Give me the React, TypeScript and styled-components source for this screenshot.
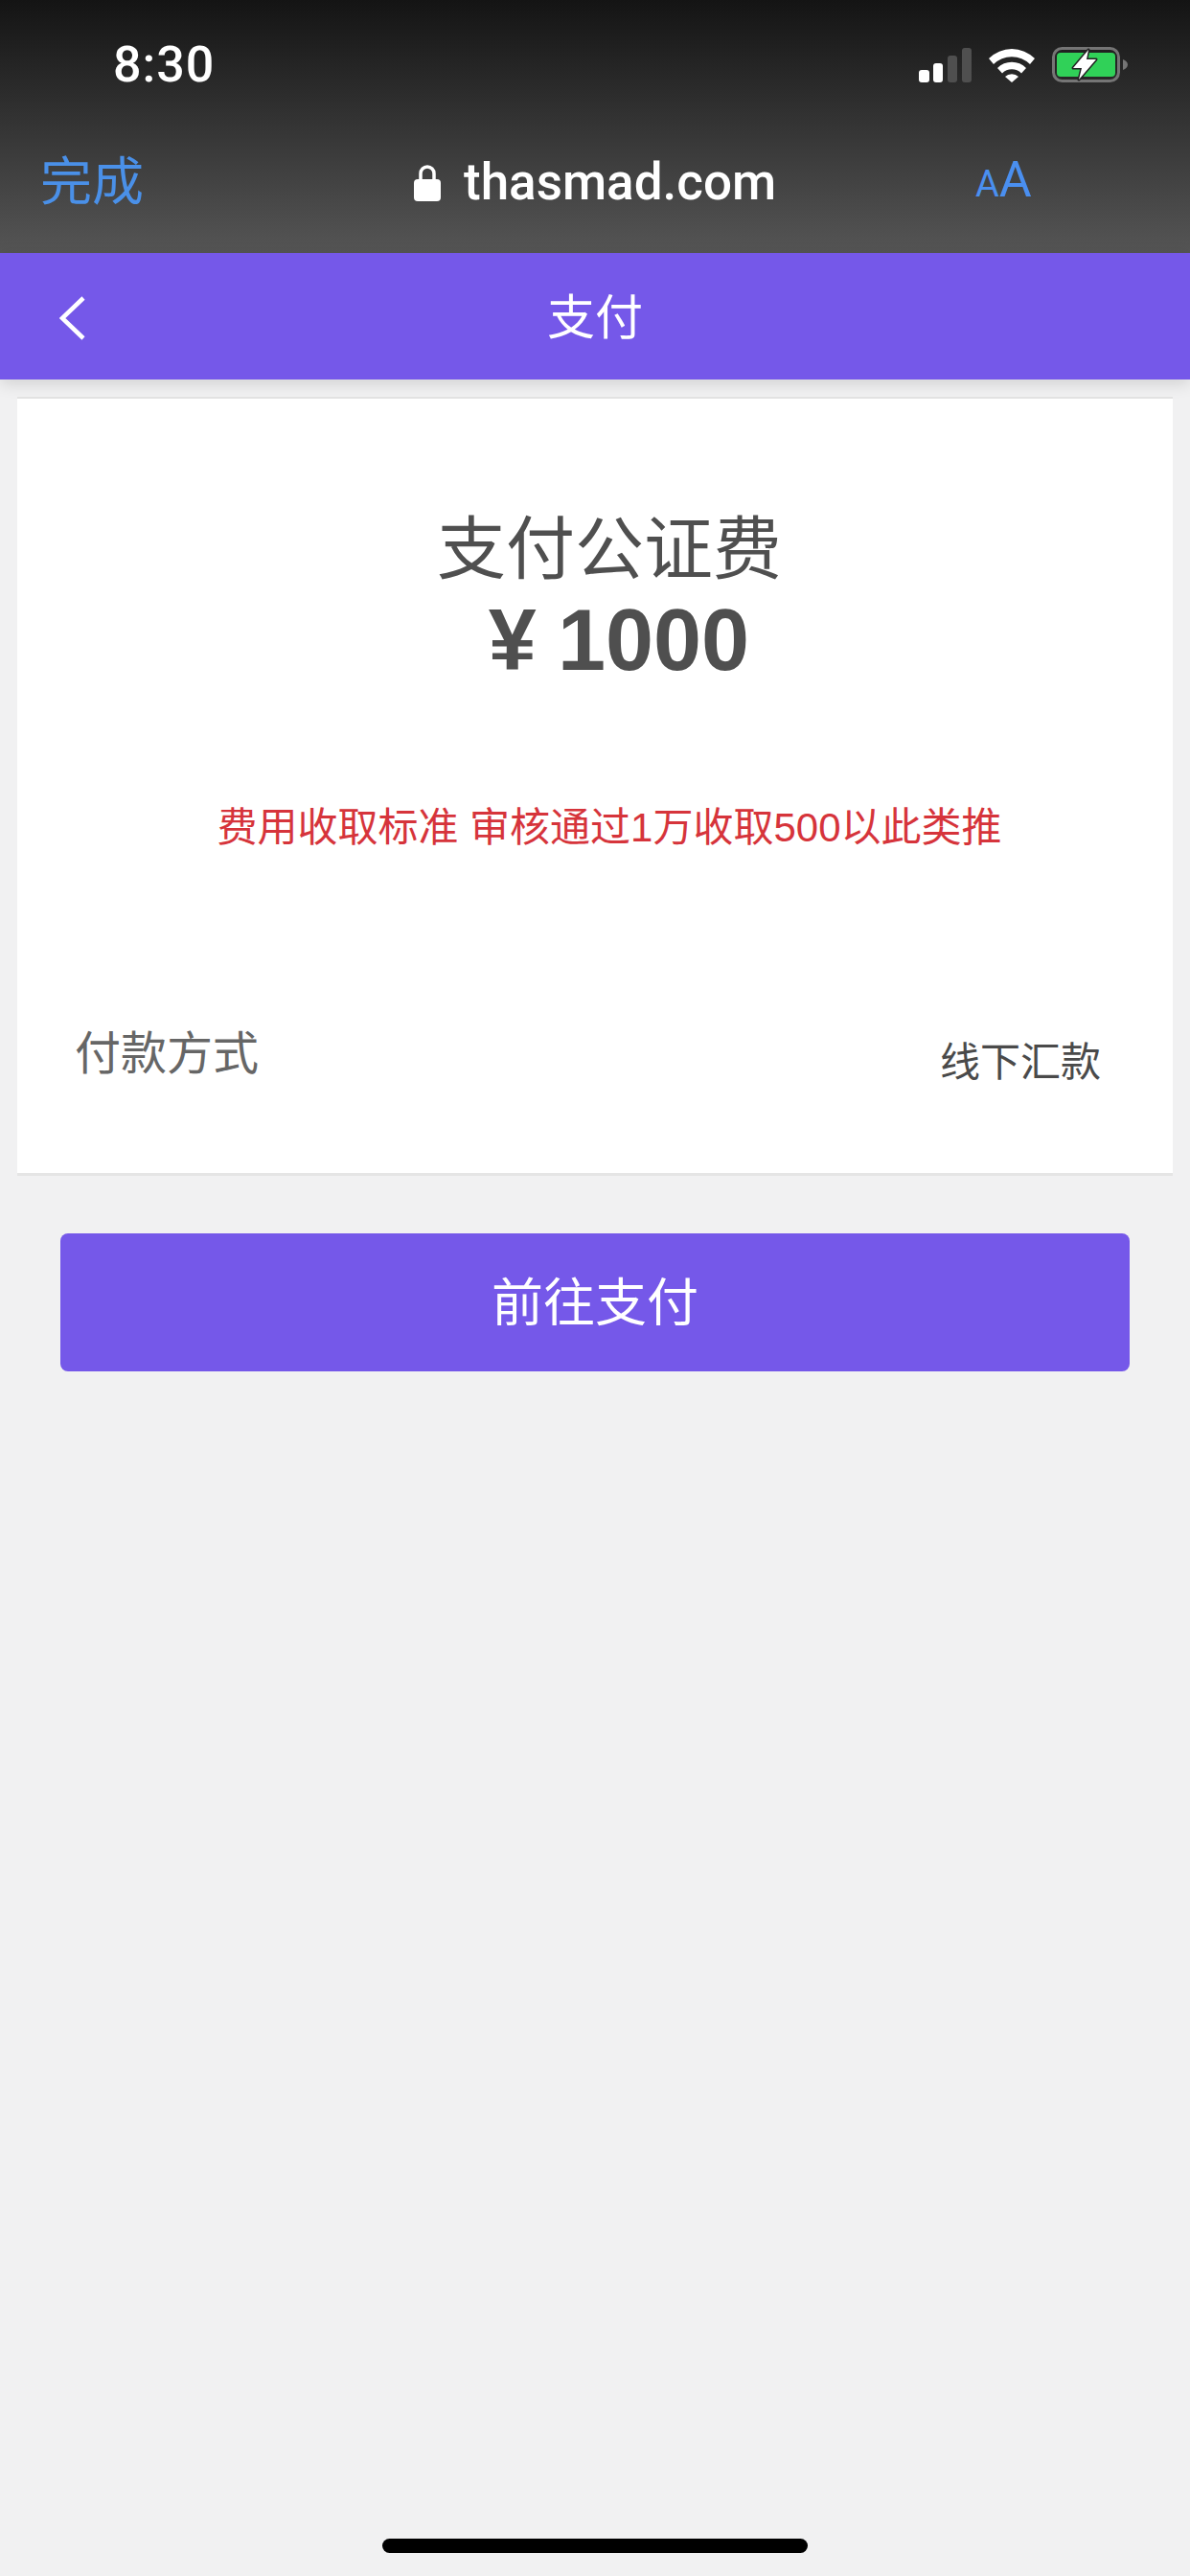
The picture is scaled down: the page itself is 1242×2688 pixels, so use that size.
import styled, { createGlobalStyle } from 'styled-components';

const purple = '#7558e9';

const GlobalStyle = createGlobalStyle`
  html, body {
    margin: 0;
    padding: 0;
    background: #f1f1f2;
  }
  * {
    box-sizing: border-box;
  }
`;

const Page = styled.div`
  width: 1242px;
  height: 2688px;
  display: flex;
  flex-direction: column;
  background: #f1f1f2;
  font-family: 'Liberation Sans', 'Noto Sans CJK SC', sans-serif;
  overflow: hidden;
`;

const BrowserChrome = styled.div`
  height: 264px;
  flex: none;
  display: flex;
  flex-direction: column;
  background: linear-gradient(180deg, #141414 0%, #555555 100%);
`;

const StatusBar = styled.div`
  height: 155px;
  padding: 42px 65px 0 118px;
  display: flex;
  justify-content: space-between;
  align-items: flex-start;
`;

const Time = styled.span`
  font-family: Roboto, sans-serif;
  font-size: 52px;
  font-weight: 500;
  line-height: 52px;
  letter-spacing: 1px;
  color: #fff;
`;

const StatusIcons = styled.div`
  display: flex;
  align-items: center;
  gap: 18px;
  padding-top: 7px;
`;

const AddressRow = styled.div`
  display: flex;
  align-items: center;
  height: 70px;
  padding: 0 42px;
`;

const DoneButton = styled.span`
  font-size: 54px;
  line-height: 70px;
  color: #4a90e8;
  width: 390px;
`;

const Domain = styled.div`
  display: flex;
  align-items: center;
  gap: 24px;
  width: 586px;
  font-family: Roboto, sans-serif;
  font-size: 53px;
  font-weight: 500;
  color: #fff;
`;

const ReaderButton = styled.div`
  display: flex;
  align-items: baseline;
  font-family: Roboto, sans-serif;
  color: #4a8ff0;
  line-height: 70px;
`;

const ReaderLetter = styled.span<{ $large?: boolean }>`
  font-size: ${(props) => (props.$large ? '52px' : '38px')};
`;

const NavBar = styled.div`
  height: 132px;
  flex: none;
  position: relative;
  z-index: 1;
  display: flex;
  align-items: center;
  padding-left: 62px;
  background: ${purple};
  box-shadow: 0 4px 16px rgba(0, 0, 0, 0.14);
`;

const BackWrap = styled.div`
  display: flex;
  margin-top: 4px;
`;

const NavTitle = styled.div`
  flex: 1;
  padding: 0 89px 6px 0;
  text-align: center;
  font-size: 50px;
  color: #fff;
`;

const Card = styled.div`
  margin: 18px 18px 0;
  height: 813px;
  flex: none;
  display: flex;
  flex-direction: column;
  background: #fff;
  border-top: 2px solid #e3e3e3;
  border-bottom: 3px solid #e5e5e5;
`;

const Summary = styled.div`
  padding: 115px 0 0 30px;
  display: flex;
  flex-direction: column;
  align-items: center;
`;

const SummaryTitle = styled.div`
  font-size: 72px;
  line-height: 84px;
  color: #4f4f4f;
`;

const Amount = styled.div`
  margin: 5px 0 0 20px;
  font-size: 90px;
  line-height: 96px;
  font-weight: 700;
  word-spacing: -3px;
  color: #4f4f4f;
`;

const FeeNote = styled.div`
  margin-top: 123px;
  font-size: 42px;
  line-height: 50px;
  color: #d6343b;
`;

const PayRow = styled.div`
  margin-top: 183px;
  padding: 0 75px 0 60px;
  display: flex;
  justify-content: space-between;
  align-items: flex-start;
`;

const PayLabel = styled.span`
  font-size: 48px;
  line-height: 56px;
  color: #666;
`;

const PayValue = styled.span`
  margin-top: 9px;
  font-size: 42px;
  line-height: 56px;
  color: #4a4a4a;
`;

const PayButton = styled.button`
  margin: 60px 63px 0;
  padding: 0 0 8px;
  height: 144px;
  flex: none;
  border: none;
  border-radius: 8px;
  background: ${purple};
  color: #fff;
  font-family: inherit;
  font-size: 54px;
`;

const HomeBar = styled.div`
  margin: auto auto 24px;
  width: 444px;
  height: 15px;
  flex: none;
  border-radius: 8px;
  background: #000;
`;

function SignalIcon() {
  return (
    <svg width="55" height="36" viewBox="0 0 55 36">
      <rect x="0" y="23" width="11" height="13" rx="3" fill="#fff" />
      <rect x="15" y="16" width="10" height="20" rx="3" fill="#fff" />
      <rect x="30" y="8" width="10" height="28" rx="3" fill="#4f4f4f" />
      <rect x="45" y="0" width="10" height="36" rx="3" fill="#4f4f4f" />
    </svg>
  );
}

function WifiIcon() {
  return (
    <svg width="48" height="36" viewBox="0 0 48 36">
      <path d="M0 11 A34 34 0 0 1 48 11 L43 17 A27 27 0 0 0 5 17 Z" fill="#fff" />
      <path d="M9 21 A21 21 0 0 1 39 21 L34 26.5 A14 14 0 0 0 14 26.5 Z" fill="#fff" />
      <path d="M17 30 A10 10 0 0 1 31 30 L24 36 Z" fill="#fff" />
    </svg>
  );
}

function BatteryIcon() {
  return (
    <svg width="79" height="37" viewBox="0 0 79 37">
      <rect x="1.5" y="1.5" width="68" height="34" rx="9" fill="none" stroke="#757575" strokeWidth="3" />
      <rect x="5" y="6" width="61" height="25" rx="4" fill="#30d158" />
      <path d="M74 13 C77 14 79 16 79 18.5 C79 21 77 23 74 24 Z" fill="#757575" />
      <path
        d="M38 3 L22 22 H31 L28 34 L46 13 H36 Z"
        fill="#fff"
        stroke="#222"
        strokeWidth="3"
        strokeLinejoin="round"
        paintOrder="stroke"
      />
    </svg>
  );
}

function LockIcon() {
  return (
    <svg width="28" height="40" viewBox="0 0 28 40">
      <path d="M7 19 V11 A7 7 0 0 1 21 11 V19" fill="none" stroke="#fff" strokeWidth="3.5" />
      <rect x="0" y="17" width="28" height="23" rx="4" fill="#fff" />
    </svg>
  );
}

function BackIcon() {
  return (
    <svg width="27" height="46" viewBox="0 0 27 46">
      <path d="M25 2 L3 23 L25 44" fill="none" stroke="#fff" strokeWidth="4.5" />
    </svg>
  );
}

export default function App() {
  return (
    <Page>
      <GlobalStyle />
      <BrowserChrome>
        <StatusBar>
          <Time>8:30</Time>
          <StatusIcons>
            <SignalIcon />
            <WifiIcon />
            <BatteryIcon />
          </StatusIcons>
        </StatusBar>
        <AddressRow>
          <DoneButton>完成</DoneButton>
          <Domain>
            <LockIcon />
            thasmad.com
          </Domain>
          <ReaderButton>
            <ReaderLetter>A</ReaderLetter>
            <ReaderLetter $large>A</ReaderLetter>
          </ReaderButton>
        </AddressRow>
      </BrowserChrome>
      <NavBar>
        <BackWrap>
          <BackIcon />
        </BackWrap>
        <NavTitle>支付</NavTitle>
      </NavBar>
      <Card>
        <Summary>
          <SummaryTitle>支付公证费</SummaryTitle>
          <Amount>¥ 1000</Amount>
          <FeeNote>费用收取标准 审核通过1万收取500以此类推</FeeNote>
        </Summary>
        <PayRow>
          <PayLabel>付款方式</PayLabel>
          <PayValue>线下汇款</PayValue>
        </PayRow>
      </Card>
      <PayButton>前往支付</PayButton>
      <HomeBar />
    </Page>
  );
}
